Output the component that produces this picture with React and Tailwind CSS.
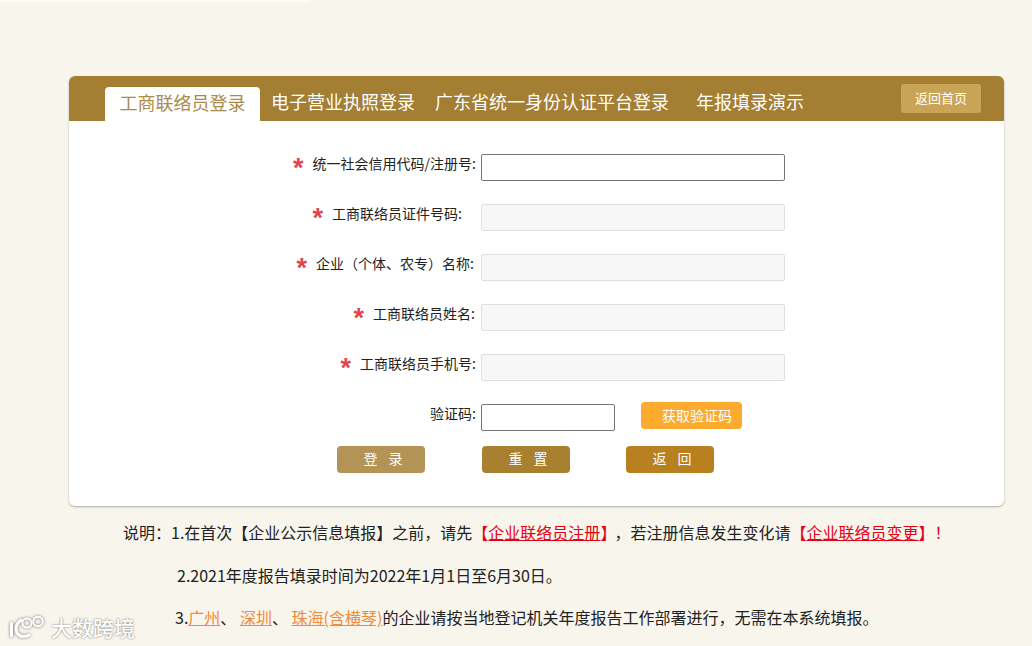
const Row = ({ label, pr, star, gray, mt }) => (
  <div className={`flex items-center h-[27px] ${mt}`}>
    <div className="w-[412px] flex justify-end items-center text-[14px] text-[#222] leading-[20px] -mt-[9px]" style={{ paddingRight: pr }}>
      {star && <span className="text-[#e0474c] text-[27px] font-bold leading-[20px] mr-[9px] mt-[10px] font-['Liberation_Sans']">*</span>}
      <span>{label}</span>
    </div>
    <input
      disabled={gray}
      className={`w-[304px] h-[27px] rounded-[2px] border ${gray ? "bg-[#f7f7f7] border-[#dfdfdf]" : "bg-white border-[#767676]"}`}
    />
  </div>
);

const Btn = ({ children, cls, ml }) => (
  <button className={`w-[88px] h-[27px] rounded-[4px] text-white text-[14px] tracking-[4px] pl-[8px] pb-[2px] ${cls} ${ml}`}>{children}</button>
);

const Logo = () => (
  <svg width="37" height="24" viewBox="0 0 37 24" fill="none" stroke="#fff" strokeWidth="3" strokeLinecap="round" className="drop-shadow-[0_0_1.5px_rgba(0,0,0,0.55)]">
    <path d="M2.5 8 L2.5 21" />
    <path d="M12 5 C7 9 6 14 8 18 C10.5 22 16 22.5 20 20" />
    <circle cx="18" cy="8" r="4.6" strokeWidth="2" />
    <circle cx="29" cy="6.5" r="4.8" strokeWidth="2" />
  </svg>
);

export default function App() {
  return (
    <div className="relative w-[1032px] h-[646px] overflow-hidden bg-[#f8f5ed] font-['Noto_Sans_CJK_SC',sans-serif] pt-[76px] pl-[69px]">
      <div className="absolute top-0 left-0 w-[310px] h-[2px] bg-[#fdfcf9]" />
      <div className="w-[935px] h-[430px] bg-white rounded-[6px] shadow-[0_1px_2px_rgba(0,0,0,0.3)] overflow-hidden">
        <div className="relative flex items-end h-[45px] bg-[#a37e33] pl-[36px] text-[18px] text-white leading-[26px]">
          <div className="w-[155px] h-[34px] bg-white rounded-t-[4px] text-[#a98c4d] text-center pt-[2px]">工商联络员登录</div>
          <div className="flex pb-[7px]">
            <span className="ml-[11px]">电子营业执照登录</span>
            <span className="ml-[20px]">广东省统一身份认证平台登录</span>
            <span className="ml-[27px]">年报填录演示</span>
          </div>
          <button className="absolute right-[23px] top-[8px] w-[80px] h-[29px] rounded-[3px] bg-[#c9a356] text-[13px] text-white pb-[2px]">返回首页</button>
        </div>

        <div className="pt-[33px]">
          <Row label="统一社会信用代码/注册号:" pr={5} star />
          <Row label="工商联络员证件号码:" pr={19} star gray mt="mt-[23px]" />
          <Row label="企业（个体、农专）名称:" pr={7} star gray mt="mt-[23px]" />
          <Row label="工商联络员姓名:" pr={6} star gray mt="mt-[23px]" />
          <Row label="工商联络员手机号:" pr={5} star gray mt="mt-[23px]" />
          <div className="flex items-center h-[27px] mt-[23px]">
            <div className="w-[412px] text-right pr-[5px] text-[14px] text-[#222] leading-[20px] -mt-[9px]">验证码:</div>
            <input className="w-[134px] h-[27px] rounded-[2px] border border-[#767676] bg-white" />
            <button className="ml-[26px] -mt-[4px] w-[101px] h-[27px] rounded-[4px] bg-[#fdab2f] text-white text-[14px] pl-[21px] pb-[1px] text-left">获取验证码</button>
          </div>
          <div className="flex pl-[268px] mt-[15px]">
            <Btn cls="bg-[#b49356]">登 录</Btn>
            <Btn cls="bg-[#a97f30]" ml="ml-[57px]">重 置</Btn>
            <Btn cls="bg-[#b8801e]" ml="ml-[56px]">返 回</Btn>
          </div>
        </div>
      </div>

      <div className="text-[16px] text-[#222] leading-[22px]">
        <p className="mt-[15px] ml-[54px] whitespace-nowrap">
          说明：1.在首次【企业公示信息填报】之前，请先
          <span className="text-[#e60012]">【<a className="underline">企业联络员注册</a>】</span>
          <span className="ml-[6px]">，若注册信息发生变化请</span>
          <span className="text-[#e60012]">【<a className="underline">企业联络员变更</a>】！</span>
        </p>
        <p className="mt-[21px] ml-[108px] whitespace-nowrap">2.2021年度报告填录时间为2022年1月1日至6月30日。</p>
        <p className="mt-[20px] ml-[106px] whitespace-nowrap">
          3.<a className="underline text-[#f08b3c]">广州</a>、 <a className="underline text-[#f08b3c]">深圳</a>、 <a className="underline text-[#f08b3c]">珠海(含横琴)</a>的企业请按当地登记机关年度报告工作部署进行，无需在本系统填报。
        </p>
      </div>

      <div className="absolute left-[9px] top-[614px] flex items-center gap-[5px] text-white text-[21px] font-medium leading-[26px] [text-shadow:0_0_2px_rgba(0,0,0,0.6)]">
        <Logo />
        <span>大数跨境</span>
      </div>
    </div>
  );
}
